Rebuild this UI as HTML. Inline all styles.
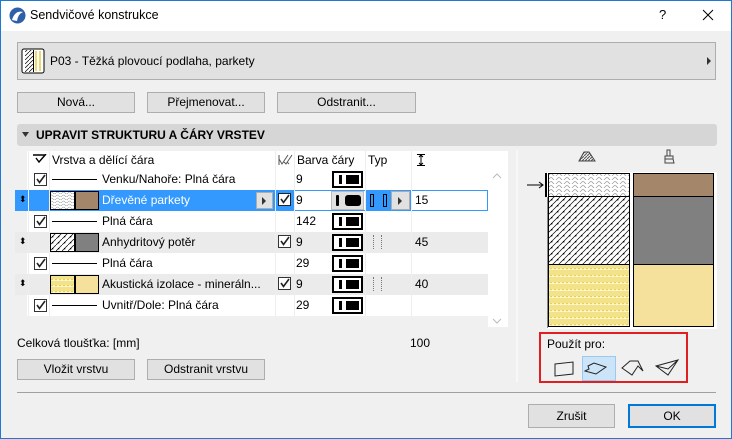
<!DOCTYPE html>
<html><head><meta charset="utf-8"><style>
*{box-sizing:border-box;margin:0;padding:0}
body{width:732px;height:439px;overflow:hidden;background:#f0f0f0;font-family:"Liberation Sans",sans-serif;font-size:12px;color:#000;position:relative}
.a{position:absolute}
.win{left:0;top:0;width:732px;height:439px;border:1px solid #1c7ad4}
.btn{position:absolute;background:#e1e1e1;border:1px solid #adadad;text-align:center;line-height:19px}
.row{position:absolute;left:27px;width:461px;height:21px}
.t{position:absolute;white-space:nowrap}
.cb{position:absolute;width:13px;height:13px;border:1px solid #333;background:#fff}
.cb svg{position:absolute;left:0;top:0}
.pen{position:absolute;left:332px;width:31px;height:17px;border:2px solid #000;background:#fff}
.pen i{position:absolute;left:5px;top:2px;width:3px;height:9px;background:#000}
.pen b{position:absolute;left:12px;top:2px;width:13px;height:9px;background:#000}
.ln{position:absolute;left:25px;width:45px;height:1px;background:#000;top:10px}
</style></head><body>
<div class="a win"></div>
<div class="a" style="left:1px;top:1px;width:730px;height:30px;background:#fff"></div>
<svg class="a" style="left:9px;top:7px" width="17" height="17"><circle cx="8.5" cy="8.5" r="8" fill="#2e5fa8"/><path d="M3 13 Q6 3 14 5 Q9 7 8 14Z" fill="#fff"/></svg>
<div class="t" style="left:30px;top:8px;font-size:12.5px">Sendvičové konstrukce</div>
<div class="t" style="left:659px;top:7px;font-size:13px">?</div>
<svg class="a" style="left:702px;top:9px" width="12" height="12"><path d="M1 1L11 11M11 1L1 11" stroke="#000" stroke-width="1"/></svg>

<div class="a" style="left:17px;top:42px;width:699px;height:38px;background:#e1e1e1;border:1px solid #adadad"></div>
<svg class="a" style="left:21px;top:48px" width="24" height="26"><defs><pattern id="dh" width="4" height="4" patternUnits="userSpaceOnUse"><path d="M0 4L4 0" stroke="#000" stroke-width=".7"/></pattern></defs><rect x="1" y="1" width="22" height="24" rx="2" fill="#fff" stroke="#000"/><rect x="4" y="2" width="8" height="22" fill="url(#dh)"/><rect x="13" y="2" width="8" height="22" fill="#fff"/><path d="M15 3v20M19 3v20" stroke="#e8c840" stroke-width="1.5"/><path d="M12.5 2v22" stroke="#000"/></svg>
<div class="t" style="left:50px;top:54px">P03 - Těžká plovoucí podlaha, parkety</div>
<svg class="a" style="left:707px;top:57px" width="5" height="8"><path d="M0 0L4 4L0 8Z" fill="#333"/></svg>

<div class="btn" style="left:17px;top:92px;width:118px;height:21px">Nová...</div>
<div class="btn" style="left:147px;top:92px;width:118px;height:21px">Přejmenovat...</div>
<div class="btn" style="left:277px;top:92px;width:139px;height:21px">Odstranit...</div>

<div class="a" style="left:17px;top:124px;width:700px;height:22px;background:#d6d6d6;border-radius:3px"></div>
<svg class="a" style="left:22px;top:132px" width="8" height="6"><path d="M0 0H7L3.5 5Z" fill="#333"/></svg>
<div class="t" style="left:36px;top:128px;font-weight:bold">UPRAVIT STRUKTURU A ČÁRY VRSTEV</div>

<div class="a" style="left:27px;top:151px;width:461px;height:165px;background:#fff"></div>
<div class="a" style="left:488px;top:151px;width:20px;height:176px;background:#fff"></div>
<svg class="a" style="left:492px;top:173px" width="10" height="6"><path d="M1 5L5 1L9 5" stroke="#bbb" fill="none"/></svg>
<svg class="a" style="left:492px;top:318px" width="10" height="6"><path d="M1 1L5 5L9 1" stroke="#bbb" fill="none"/></svg>

<svg class="a" style="left:33px;top:154px" width="14" height="10"><path d="M0 1H12M3 4L6 8L13 0" stroke="#000" stroke-width="1.4" fill="none"/></svg>
<div class="t" style="left:52px;top:153px">Vrstva a dělící čára</div>
<svg class="a" style="left:278px;top:154px" width="15" height="12"><path d="M1 1v10M1 5L4 10L10 1M6 8L8 10L14 1M9 8l2 2" stroke="#555" fill="none"/></svg>
<div class="t" style="left:297px;top:153px">Barva čáry</div>
<div class="t" style="left:368px;top:153px">Typ</div>
<svg class="a" style="left:417px;top:154px" width="9" height="12"><path d="M0 .5H8M0 11.5H8M4 1v10M2 3L4 1L6 3M2 9L4 11L6 9" stroke="#000" fill="none"/></svg>

<div class="row" style="top:169px"><div class="cb" style="left:7px;top:4px"><svg width="11" height="11"><path d="M2 5L4.5 8.5L10 1" stroke="#222" stroke-width="1.6" fill="none"/></svg></div><div class="ln"></div><div class="t" style="left:75px;top:3px">Venku/Nahoře: Plná čára</div><div class="t" style="left:269px;top:3px">9</div><div class="pen" style="left:305px;top:2px"><i></i><b></b></div></div>

<div class="a" style="left:15px;top:190px;width:279px;height:21px;background:#3399ff"></div>
<div class="a" style="left:365px;top:190px;width:47px;height:21px;background:#3399ff"></div>
<div class="a" style="left:294px;top:190px;width:194px;height:21px;border:1px solid #3399ff"></div>
<div class="a" style="left:294px;top:191px;width:71px;height:19px;background:#fff"></div>
<div class="a" style="left:412px;top:191px;width:75px;height:19px;background:#fff"></div>
<div class="t" style="left:19px;top:194px;font-size:9px">⬍</div>
<svg class="a" style="left:50px;top:191px" width="25" height="19"><defs><pattern id="wv" width="6" height="3" patternUnits="userSpaceOnUse"><path d="M0 2Q1.5 0 3 2T6 2" stroke="#999" stroke-width=".6" fill="none"/></pattern></defs><rect x=".5" y=".5" width="24" height="18" fill="#fff" stroke="#000"/><rect x="1" y="1" width="23" height="17" fill="url(#wv)"/></svg>
<div class="a" style="left:75px;top:191px;width:24px;height:19px;background:#a4866a;border:1px solid #000"></div>
<div class="t" style="left:102px;top:193px;color:#fff">Dřevěné parkety</div>
<div class="a" style="left:256px;top:192px;width:17px;height:17px;background:#e1e1e1;border:1px solid #adadad"></div>
<svg class="a" style="left:262px;top:197px" width="5" height="8"><path d="M0 0L4 4L0 8Z" fill="#333"/></svg>
<div class="cb" style="left:278px;top:193px;border-color:#222;background:#fff"><svg width="11" height="11"><path d="M2 5L4.5 8.5L10 1" stroke="#222" stroke-width="1.6" fill="none"/></svg></div>
<div class="t" style="left:296px;top:193px">9</div>
<div class="a" style="left:331px;top:191px;width:33px;height:19px;background:#e1e1e1;border:1px solid #bbb"></div>
<div class="a" style="left:336px;top:195px;width:3px;height:11px;background:#000;border-radius:1px"></div>
<div class="a" style="left:345px;top:195px;width:16px;height:11px;background:#000;border-radius:3px"></div>
<div class="a" style="left:370px;top:194px;width:4px;height:13px;border:1px solid #000"></div>
<div class="a" style="left:383px;top:194px;width:4px;height:13px;border:1px solid #000"></div>
<div class="a" style="left:391px;top:191px;width:19px;height:19px;background:#e1e1e1;border:1px solid #adadad"></div>
<svg class="a" style="left:398px;top:197px" width="5" height="8"><path d="M0 0L4 4L0 8Z" fill="#333"/></svg>
<div class="t" style="left:415px;top:193px">15</div>

<div class="row" style="top:211px"><div class="cb" style="left:7px;top:4px"><svg width="11" height="11"><path d="M2 5L4.5 8.5L10 1" stroke="#222" stroke-width="1.6" fill="none"/></svg></div><div class="ln"></div><div class="t" style="left:75px;top:3px">Plná čára</div><div class="t" style="left:269px;top:3px">142</div><div class="pen" style="left:305px;top:2px"><i></i><b></b></div></div>

<div class="a" style="left:15px;top:232px;width:473px;height:21px;background:#ebebeb"></div>
<div class="t" style="left:19px;top:236px;font-size:9px">⬍</div>
<svg class="a" style="left:50px;top:233px" width="25" height="19"><defs><pattern id="dd" width="6" height="6" patternUnits="userSpaceOnUse"><path d="M0 6L6 0" stroke="#000" stroke-width=".7"/><rect x="2" y="3" width="1.3" height="1.3" fill="#000"/></pattern></defs><rect x=".5" y=".5" width="24" height="18" fill="#fff" stroke="#000"/><rect x="1" y="1" width="23" height="17" fill="url(#dd)"/></svg>
<div class="a" style="left:75px;top:233px;width:24px;height:19px;background:#808080;border:1px solid #000"></div>
<div class="t" style="left:102px;top:235px">Anhydritový potěr</div>
<div class="cb" style="left:278px;top:235px"><svg width="11" height="11"><path d="M2 5L4.5 8.5L10 1" stroke="#222" stroke-width="1.6" fill="none"/></svg></div>
<div class="t" style="left:296px;top:235px">9</div>
<div class="pen" style="top:234px"><i></i><b></b></div>
<div class="a" style="left:373px;top:235px;width:1px;height:14px;border-left:1px dotted #777"></div><div class="a" style="left:381px;top:235px;width:1px;height:14px;border-left:1px dotted #777"></div>
<div class="t" style="left:415px;top:235px">45</div>

<div class="row" style="top:253px"><div class="cb" style="left:7px;top:4px"><svg width="11" height="11"><path d="M2 5L4.5 8.5L10 1" stroke="#222" stroke-width="1.6" fill="none"/></svg></div><div class="ln"></div><div class="t" style="left:75px;top:3px">Plná čára</div><div class="t" style="left:269px;top:3px">29</div><div class="pen" style="left:305px;top:2px"><i></i><b></b></div></div>

<div class="a" style="left:15px;top:274px;width:473px;height:21px;background:#ebebeb"></div>
<div class="t" style="left:19px;top:278px;font-size:9px">⬍</div>
<svg class="a" style="left:50px;top:275px" width="25" height="19"><defs><pattern id="yz" width="4" height="6" patternUnits="userSpaceOnUse"><path d="M1 0v4Q2 6 3 4V0" stroke="#e0c020" stroke-width=".8" fill="none"/></pattern></defs><rect x=".5" y=".5" width="24" height="18" fill="#fff8d0" stroke="#000"/><rect x="1" y="1" width="23" height="17" fill="url(#yz)"/></svg>
<div class="a" style="left:75px;top:275px;width:24px;height:19px;background:#f5e19b;border:1px solid #000"></div>
<div class="t" style="left:102px;top:277px">Akustická izolace - mineráln...</div>
<div class="cb" style="left:278px;top:277px"><svg width="11" height="11"><path d="M2 5L4.5 8.5L10 1" stroke="#222" stroke-width="1.6" fill="none"/></svg></div>
<div class="t" style="left:296px;top:277px">9</div>
<div class="pen" style="top:276px"><i></i><b></b></div>
<div class="a" style="left:373px;top:277px;width:1px;height:14px;border-left:1px dotted #777"></div><div class="a" style="left:381px;top:277px;width:1px;height:14px;border-left:1px dotted #777"></div>
<div class="t" style="left:415px;top:277px">40</div>

<div class="row" style="top:295px"><div class="cb" style="left:7px;top:4px"><svg width="11" height="11"><path d="M2 5L4.5 8.5L10 1" stroke="#222" stroke-width="1.6" fill="none"/></svg></div><div class="ln"></div><div class="t" style="left:75px;top:3px">Uvnitř/Dole: Plná čára</div><div class="t" style="left:269px;top:3px">29</div><div class="pen" style="left:305px;top:2px"><i></i><b></b></div></div>

<div class="a" style="left:28px;top:151px;width:1px;height:165px;background:#eee"></div>
<div class="a" style="left:49px;top:151px;width:1px;height:165px;background:#eee"></div>
<div class="a" style="left:275px;top:151px;width:1px;height:165px;background:#eee"></div>
<div class="a" style="left:294px;top:151px;width:1px;height:165px;background:#eee"></div>
<div class="a" style="left:365px;top:151px;width:1px;height:165px;background:#eee"></div>
<div class="a" style="left:411px;top:151px;width:1px;height:165px;background:#eee"></div>

<div class="t" style="left:17px;top:336px">Celková tloušťka: [mm]</div>
<div class="t" style="left:410px;top:336px">100</div>
<div class="btn" style="left:17px;top:359px;width:118px;height:21px">Vložit vrstvu</div>
<div class="btn" style="left:147px;top:359px;width:118px;height:21px">Odstranit vrstvu</div>

<div class="a" style="left:516px;top:150px;width:2px;height:232px;background:#f7f7f7"></div>
<svg class="a" style="left:578px;top:150px" width="18" height="12"><defs><pattern id="ih" width="3" height="3" patternUnits="userSpaceOnUse"><path d="M0 3L3 0" stroke="#555"/></pattern></defs><path d="M1 11L6 2H11L17 11Z" fill="url(#ih)" stroke="#444"/></svg>
<svg class="a" style="left:662px;top:149px" width="14" height="15"><path d="M5 1h3v6h-3zM3 7h8v3H3zM3 10v4h9l-1-4" stroke="#444" fill="none"/></svg>
<svg class="a" style="left:525px;top:172px" width="192" height="157">
<defs>
<pattern id="pw" width="8" height="4" patternUnits="userSpaceOnUse"><path d="M0 3Q2 0 4 3T8 3" stroke="#999" stroke-width=".7" fill="none"/></pattern>
<pattern id="pd" width="6" height="6" patternUnits="userSpaceOnUse"><path d="M-1 1L1 -1M0 6L6 0M5 7L7 5" stroke="#000" stroke-width=".7"/><rect x="2" y="3" width="1.4" height="1.4" fill="#000"/></pattern>
<pattern id="py" width="4" height="7" patternUnits="userSpaceOnUse"><path d="M1 0v5Q2 7 3 5V0" stroke="#e0c020" stroke-width=".8" fill="none"/></pattern>
</defs>
<rect x="22" y="0" width="170" height="157" fill="#fff"/>
<rect x="23.5" y="1.5" width="81" height="23" fill="url(#pw)" stroke="#000"/>
<rect x="23.5" y="24.5" width="81" height="68" fill="url(#pd)" stroke="#000"/>
<rect x="23.5" y="92.5" width="81" height="62" fill="#fff8d0" stroke="#000"/>
<rect x="24" y="93" width="80" height="61" fill="url(#py)"/>
<rect x="108.5" y="1.5" width="80" height="23" fill="#a4866a" stroke="#000"/>
<rect x="108.5" y="24.5" width="80" height="68" fill="#808080" stroke="#000"/>
<rect x="108.5" y="92.5" width="80" height="62" fill="#f5e19b" stroke="#000"/>
<rect x="20" y="1" width="2" height="24" fill="#000"/>
<rect x="22" y="25" width="1" height="131" fill="#888"/>
<path d="M2 13H18M14 10L18 13L14 16" stroke="#000" fill="none"/>
</svg>
<div class="a" style="left:539px;top:332px;width:149px;height:51px;border:2px solid #e02020"></div>
<div class="t" style="left:547px;top:337px">Použít pro:</div>
<div class="a" style="left:582px;top:356px;width:34px;height:25px;background:#cce4f7;border:1px solid #99c9ef"></div>
<svg class="a" style="left:552px;top:356px" width="136" height="25" fill="none" stroke="#222" stroke-width="1">
<path d="M3 8L21 6V18L3 20Z"/>
<path d="M36 10L42 7L54 11L44 18L33 15L37 13Z"/>
<path d="M70 12L78 5H86L91 15L86 10L80 19Z"/>
<path d="M104 10L126 4L116 19ZM104 10L116 13L126 4"/>
</svg>

<div class="a" style="left:17px;top:392px;width:699px;height:1px;background:#a0a0a0"></div>
<div class="btn" style="left:528px;top:404px;width:87px;height:24px;line-height:22px">Zrušit</div>
<div class="btn" style="left:628px;top:404px;width:88px;height:24px;line-height:20px;border:2px solid #0078d7">OK</div>
</body></html>
